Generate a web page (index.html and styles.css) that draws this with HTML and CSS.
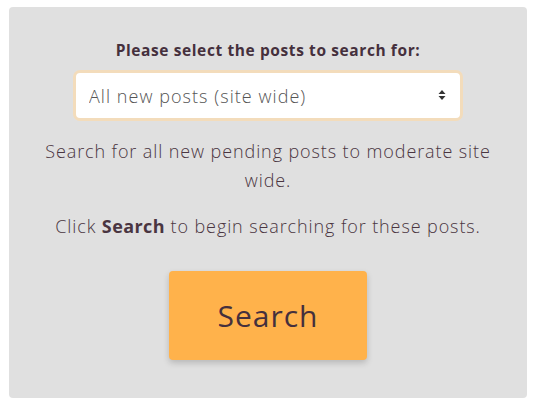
FILE: index.html
```html
<!DOCTYPE html>
<html>
<head>
<meta charset="utf-8">
<link rel="stylesheet" href="styles.css">
</head>
<body>
<div class="panel">
  <label class="title" for="scope">Please select the posts to search for:</label>
  <div class="select-wrap">
    <select id="scope" class="select">
      <option>All new posts (site wide)</option>
    </select>
    <svg class="arrows" width="8" height="12" viewBox="0 0 8 12"><path d="M4 1 L7.5 5 H0.5 Z M4 11 L7.5 7 H0.5 Z" fill="#333"/></svg>
  </div>
  <p class="desc">Search for all new pending posts to moderate site wide.</p>
  <p class="hint">Click <b>Search</b> to begin searching for these posts.</p>
  <button class="btn">Search</button>
</div>
</body>
</html>
```
FILE: styles.css
```css
html, body {
  margin: 0;
  padding: 0;
  background: #fff;
}
body {
  padding: 7px 9px 0 9px;
  font-family: "Open Sans", "Noto Sans", sans-serif;
  color: #4a3541;
}
.panel {
  box-sizing: border-box;
  width: 518px;
  height: 391px;
  background: #e0e0e0;
  border-radius: 4px;
  padding: 33px 30px 0 30px;
  display: flex;
  flex-direction: column;
  align-items: center;
}
.title {
  font-size: 15.5px;
  font-weight: 700;
  line-height: 20px;
  letter-spacing: 0.6px;
  color: #45303d;
}
.select-wrap {
  position: relative;
  margin-top: 10px;
  width: 390px;
  height: 51px;
  box-sizing: border-box;
  border: 3px solid #f3dcbb;
  border-radius: 7px;
  background: #fff;
}
.select {
  appearance: none;
  -webkit-appearance: none;
  width: 100%;
  height: 100%;
  border: 0;
  outline: none;
  background: transparent;
  font-family: inherit;
  font-size: 18px;
  font-weight: 300;
  letter-spacing: 1.05px;
  color: #555;
  padding: 0 0 0 13px;
  border-radius: 4px;
}
.arrows {
  position: absolute;
  right: 14px;
  top: 16px;
}
.desc {
  margin: 16px 0 0 0;
  font-size: 18px;
  font-weight: 300;
  line-height: 29px;
  letter-spacing: 0.9px;
  text-align: center;
}
.hint {
  margin: 17px 0 0 0;
  font-size: 18px;
  font-weight: 300;
  line-height: 29px;
  letter-spacing: 0.9px;
  text-align: center;
}
.hint b {
  font-weight: 700;
  letter-spacing: 0.4px;
}
.btn {
  margin-top: 30px;
  width: 198px;
  height: 89px;
  border: 0;
  border-radius: 4px;
  background: #ffb24b;
  box-shadow: 0 3px 6px rgba(0,0,0,0.18);
  font-family: inherit;
  font-size: 30px;
  font-weight: 400;
  letter-spacing: 1px;
  color: #45303d;
}
```
